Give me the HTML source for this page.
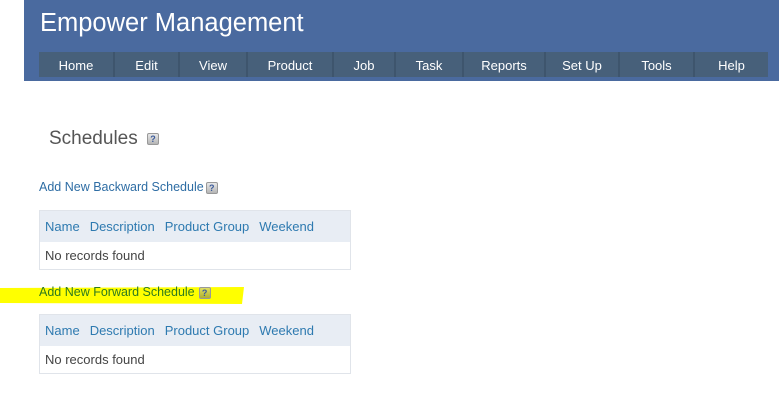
<!DOCTYPE html>
<html><head><meta charset="utf-8"><style>
*{margin:0;padding:0;box-sizing:border-box}
body{width:779px;height:405px;background:#fff;font-family:"Liberation Sans",sans-serif;position:relative;overflow:hidden}
.hdr{position:absolute;left:24px;top:0;width:755px;height:81px;background:#4a6a9f}
.title{position:absolute;left:40px;top:9px;color:#fff;font-size:25.5px}
.nav{position:absolute;left:39px;top:52px;width:729px;height:25px;background:#47607a;display:flex}
.nav div{color:#fff;font-size:13px;text-align:center;line-height:27px;border-right:2px solid #3e556d}
.nav div:last-child{border-right:none}
.h1{position:absolute;left:49px;top:128px;font-size:19px;color:#555}
.q{display:inline-block;width:12px;height:12px;background:linear-gradient(#e8e8e8,#b5b5b5);border:1px solid #999;border-radius:2px;font-size:9px;font-weight:bold;color:#3a5a9a;text-align:center;line-height:10px;vertical-align:middle}
.link{position:absolute;left:39px;font-size:12.5px;color:#2e6da4}
.tbl{position:absolute;left:39px;width:312px;border:1px solid #e0e4ea}
.th{background:#e8edf4;height:31px;line-height:31px;font-size:13px;color:#2e7ab0;padding-left:5px;word-spacing:0}
.th span{margin-right:10px}
.td{height:27px;line-height:27px;font-size:13px;color:#444;padding-left:5px}
</style></head><body>
<div class="hdr"></div>
<div class="title">Empower Management</div>
<div class="nav">
<div style="width:76px">Home</div><div style="width:65px">Edit</div><div style="width:68px">View</div><div style="width:86px">Product</div><div style="width:62px">Job</div><div style="width:68px">Task</div><div style="width:82px">Reports</div><div style="width:74px">Set Up</div><div style="width:75px">Tools</div><div style="width:73px">Help</div>
</div>
<div class="h1">Schedules <span class="q" style="margin-left:4px">?</span></div>
<div class="link" style="top:180px">Add New Backward Schedule<span class="q" style="margin-left:2px">?</span></div>
<div class="tbl" style="top:210px"><div class="th"><span>Name</span><span>Description</span><span>Product Group</span><span>Weekend</span></div><div class="td">No records found</div></div>
<svg style="position:absolute;left:0;top:284px" width="245" height="22"><polygon points="0,4 244,3 242,20 0,19" fill="#ffff00"/></svg>
<div class="link" style="top:285px;color:#2d7a1f">Add New Forward Schedule<span class="q" style="margin-left:4px;background:linear-gradient(#e0e060,#b0b030)">?</span></div>
<div class="tbl" style="top:314px"><div class="th"><span>Name</span><span>Description</span><span>Product Group</span><span>Weekend</span></div><div class="td">No records found</div></div>
</body></html>
